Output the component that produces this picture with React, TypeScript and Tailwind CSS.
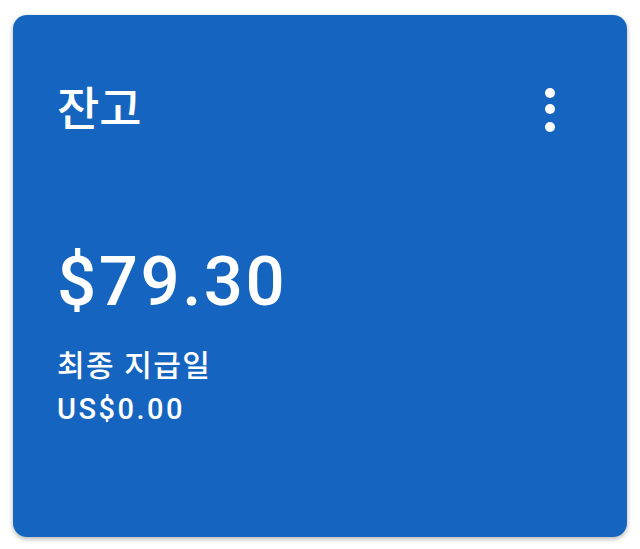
export default function App() {
  return (
    <div className="min-h-screen bg-white px-[13px] pt-[15px] pb-[12px]">
      <div
        className="flex h-[522px] flex-col rounded-[14px] bg-[#1565c0] pl-[44px] pr-[67px] pt-[66px] text-white shadow-[0_2px_5px_rgba(0,0,0,0.3)]"
        style={{ fontFamily: "Roboto, 'Noto Sans CJK KR', sans-serif" }}
      >
        <div className="flex items-start justify-between">
          <h2 className="text-[46px] font-medium leading-[56px]">잔고</h2>
          <svg width="20" height="50" viewBox="0 0 20 50" className="mt-[4px]" fill="white">
            <circle cx="10" cy="8" r="5" />
            <circle cx="10" cy="24" r="5" />
            <circle cx="10" cy="42" r="5" />
          </svg>
        </div>
        <div className="mt-[110px] text-[69px] font-medium leading-[70px] tracking-[2.5px]">$79.30</div>
        <div className="mt-[29px] text-[30px] font-medium leading-[40px] tracking-[1.5px]">최종 지급일</div>
        <div className="mt-[3px] text-[29px] font-medium leading-[40px] tracking-[2.5px]">US$0.00</div>
      </div>
    </div>
  );
}
